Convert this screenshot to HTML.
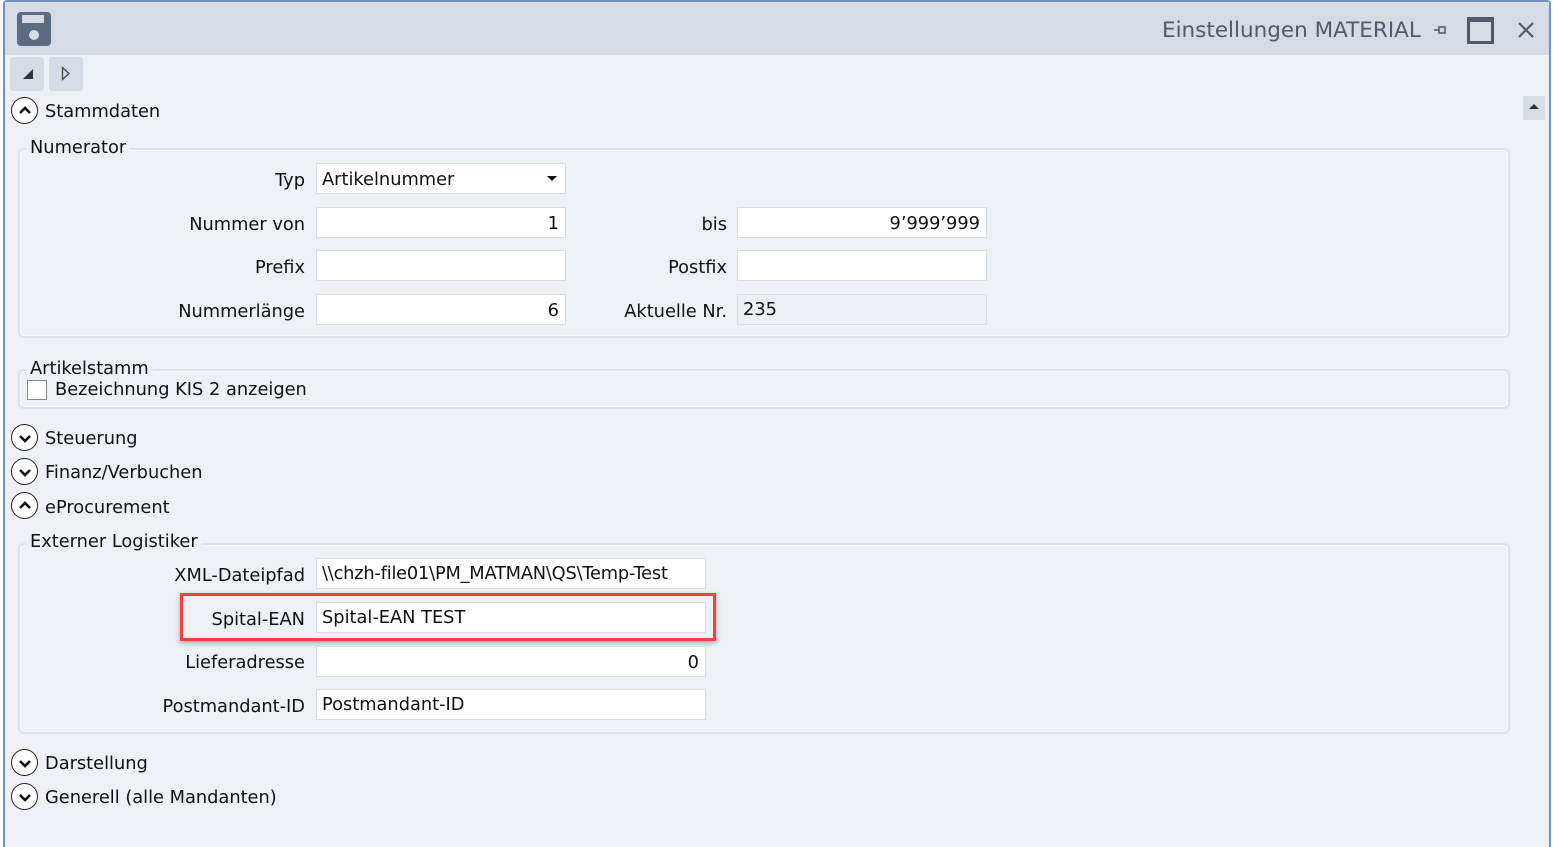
<!DOCTYPE html>
<html><head><meta charset="utf-8"><style>
*{box-sizing:border-box;margin:0;padding:0}
body{width:1553px;height:847px;overflow:hidden;background:#fff;font-family:"DejaVu Sans","Liberation Sans",sans-serif;font-size:17.8px;color:#111;position:relative}
.win{position:absolute;left:3px;top:0;width:1548px;height:847px;border:2px solid #7391c0;border-bottom:none;border-radius:4px 4px 0 0;background:#edf0f5}
.hdr{position:absolute;left:5px;top:2px;width:1544px;height:53px;background:#d5dce5}
.a{position:absolute;white-space:nowrap}
.lbl{position:absolute;white-space:nowrap;text-align:right;line-height:20px}
.in{position:absolute;background:#fff;border:1px solid #d8dde4;height:31px;line-height:31px;padding:0 6px 0 5px;white-space:nowrap}
.fs{position:absolute;border:2px solid #dde2e9;border-radius:6px;box-shadow:inset 0 0 0 1px #f8f9fb}
.leg{position:absolute;background:#edf0f5;padding:0 4px;line-height:20px}
.circ{position:absolute;width:27px;height:27px;border:1.5px solid #222;border-radius:50%;background:#fff}
.sec{position:absolute;left:45px;line-height:22px}
</style></head><body>
<div class="win"></div>
<div class="hdr"></div>
<svg class="a" style="left:17px;top:12px" width="34" height="34" viewBox="0 0 34 34"><rect x="0" y="0" width="34" height="34" rx="4" fill="#5c6b80"/><rect x="5" y="3" width="22" height="8" fill="#d5dce5"/><circle cx="17" cy="23" r="5" fill="#d5dce5"/></svg>
<div class="a" style="left:1162px;top:18px;font-size:21.5px;color:#4f5b6a">Einstellungen MATERIAL</div>
<svg class="a" style="left:1433px;top:24px" width="14" height="12"><line x1="1" y1="6" x2="6" y2="6" stroke="#4f5b6a" stroke-width="1.5"/><rect x="6" y="3" width="6" height="6" fill="none" stroke="#4f5b6a" stroke-width="1.5"/></svg>
<div class="a" style="left:1467px;top:17px;width:27px;height:27px;border:3px solid #4f5b6a;border-top-width:5px"></div>
<svg class="a" style="left:1517px;top:21px" width="18" height="18"><path d="M2 2L16 16M16 2L2 16" stroke="#4f5b6a" stroke-width="2.2"/></svg>
<div class="a" style="left:10px;top:57px;width:34px;height:34px;background:#d5dce5;border-radius:3px"></div>
<svg class="a" style="left:22px;top:68px" width="12" height="12"><polygon points="11,1 11,11 1,11" fill="#333"/></svg>
<div class="a" style="left:49px;top:57px;width:34px;height:34px;background:#d5dce5;border-radius:3px"></div>
<svg class="a" style="left:61px;top:66px" width="10" height="16"><polygon points="1.5,1.5 8,7.5 1.5,13.5" fill="none" stroke="#444" stroke-width="1.3"/></svg>
<div class="a" style="left:1523px;top:96px;width:22px;height:24px;background:#d5dce5;border-radius:2px"></div>
<svg class="a" style="left:1527px;top:101px" width="14" height="12"><polygon points="2,8 7,3 12,8" fill="#333"/></svg>

<div class="circ" style="left:11px;top:97px"></div><svg class="a" style="left:17px;top:103px" width="16" height="16"><polyline points="3,10 8,5 13,10" fill="none" stroke="#111" stroke-width="2.6"/></svg>
<div class="sec" style="top:101px">Stammdaten</div>

<div class="fs" style="left:18px;top:148px;width:1492px;height:190px"></div>
<div class="leg" style="left:26px;top:138px">Numerator</div>
<div class="lbl" style="right:1248px;top:171px">Typ</div>
<div class="in" style="left:316px;top:163px;width:250px">Artikelnummer</div>
<svg class="a" style="left:546px;top:175px" width="12" height="8"><polygon points="1,1 11,1 6,6" fill="#111"/></svg>
<div class="lbl" style="right:1248px;top:215px">Nummer von</div>
<div class="in" style="left:316px;top:207px;width:250px;text-align:right">1</div>
<div class="lbl" style="right:826px;top:215px">bis</div>
<div class="in" style="left:737px;top:207px;width:250px;text-align:right">9’999’999</div>
<div class="lbl" style="right:1248px;top:258px">Prefix</div>
<div class="in" style="left:316px;top:250px;width:250px"></div>
<div class="lbl" style="right:826px;top:258px">Postfix</div>
<div class="in" style="left:737px;top:250px;width:250px"></div>
<div class="lbl" style="right:1248px;top:302px">Nummerlänge</div>
<div class="in" style="left:316px;top:294px;width:250px;text-align:right">6</div>
<div class="lbl" style="right:826px;top:302px">Aktuelle Nr.</div>
<div class="in" style="left:737px;top:294px;width:250px;background:#eceff3;line-height:29px">235</div>

<div class="fs" style="left:18px;top:369px;width:1492px;height:40px"></div>
<div class="leg" style="left:26px;top:359px">Artikelstamm</div>
<div class="a" style="left:27px;top:380px;width:20px;height:20px;border:1px solid #888;background:#fff"></div>
<div class="a" style="left:55px;top:379px;line-height:22px">Bezeichnung KIS 2 anzeigen</div>

<div class="circ" style="left:11px;top:424px"></div><svg class="a" style="left:17px;top:430px" width="16" height="16"><polyline points="3,6 8,11 13,6" fill="none" stroke="#111" stroke-width="2.6"/></svg>
<div class="sec" style="top:428px">Steuerung</div>
<div class="circ" style="left:11px;top:458px"></div><svg class="a" style="left:17px;top:464px" width="16" height="16"><polyline points="3,6 8,11 13,6" fill="none" stroke="#111" stroke-width="2.6"/></svg>
<div class="sec" style="top:462px">Finanz/Verbuchen</div>
<div class="circ" style="left:11px;top:492px"></div><svg class="a" style="left:17px;top:498px" width="16" height="16"><polyline points="3,10 8,5 13,10" fill="none" stroke="#111" stroke-width="2.6"/></svg>
<div class="sec" style="top:497px">eProcurement</div>

<div class="fs" style="left:18px;top:543px;width:1492px;height:191px"></div>
<div class="leg" style="left:26px;top:532px">Externer Logistiker</div>
<div class="lbl" style="right:1248px;top:566px">XML-Dateipfad</div>
<div class="in" style="left:316px;top:558px;width:390px;line-height:29px;letter-spacing:-0.2px">\\chzh-file01\PM_MATMAN\QS\Temp-Test</div>
<div class="a" style="left:180px;top:593px;width:536px;height:48px;border:3px solid #f04040;box-shadow:0 2px 5px rgba(0,0,0,.3)"></div>
<div class="lbl" style="right:1248px;top:610px">Spital-EAN</div>
<div class="in" style="left:316px;top:602px;width:390px;line-height:29px">Spital-EAN TEST</div>
<div class="lbl" style="right:1248px;top:653px">Lieferadresse</div>
<div class="in" style="left:316px;top:646px;width:390px;text-align:right">0</div>
<div class="lbl" style="right:1248px;top:697px">Postmandant-ID</div>
<div class="in" style="left:316px;top:689px;width:390px;line-height:29px">Postmandant-ID</div>

<div class="circ" style="left:11px;top:749px"></div><svg class="a" style="left:17px;top:755px" width="16" height="16"><polyline points="3,6 8,11 13,6" fill="none" stroke="#111" stroke-width="2.6"/></svg>
<div class="sec" style="top:753px">Darstellung</div>
<div class="circ" style="left:11px;top:783px"></div><svg class="a" style="left:17px;top:789px" width="16" height="16"><polyline points="3,6 8,11 13,6" fill="none" stroke="#111" stroke-width="2.6"/></svg>
<div class="sec" style="top:787px">Generell (alle Mandanten)</div>
</body></html>
